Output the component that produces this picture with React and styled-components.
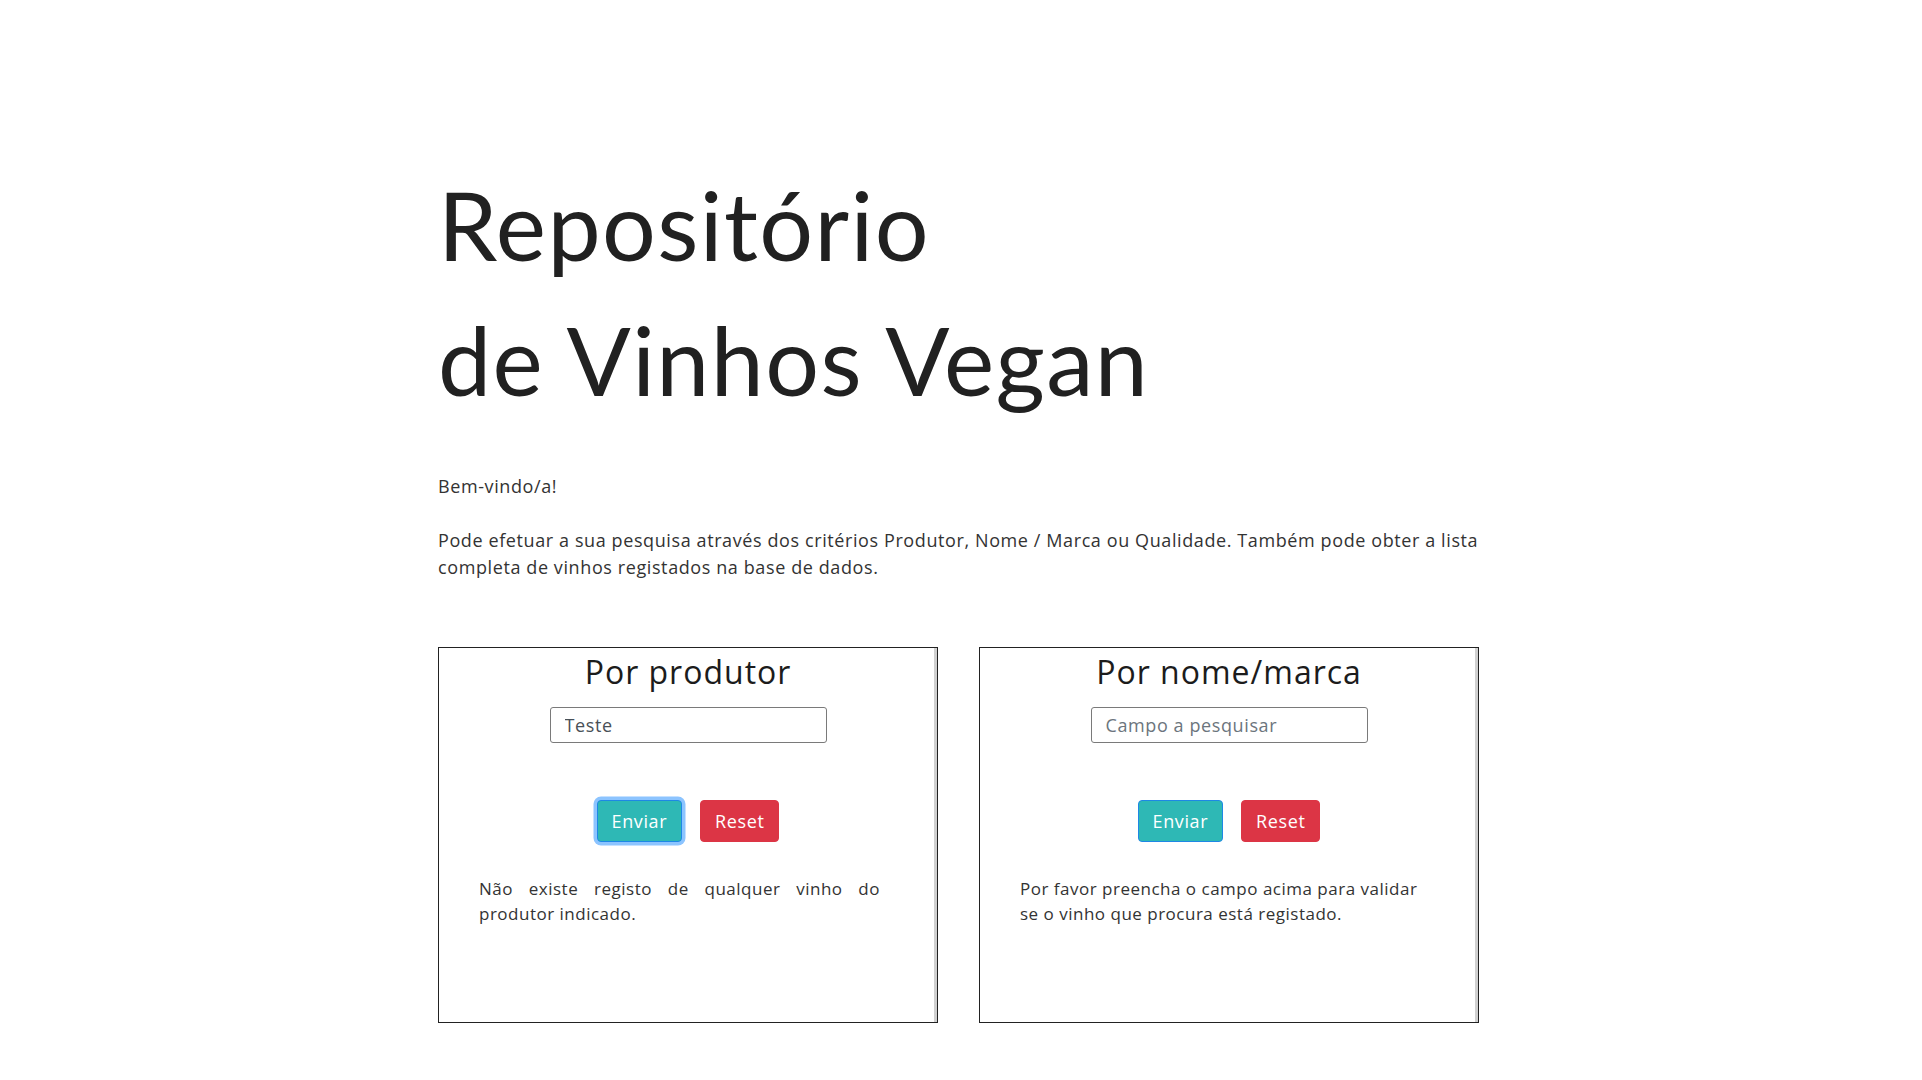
import React from 'react';
import styled, { createGlobalStyle } from 'styled-components';

const GlobalStyle = createGlobalStyle`
    html, body {
        margin: 0;
        padding: 0;
        background: #ffffff;
    }
    body {
        font-family: "Open Sans", "Noto Sans", sans-serif;
        color: #333333;
    }
`;

const Page = styled.main`
    width: 1046px;
    margin: 0 auto;
    padding-top: 157px;
    padding-bottom: 50px;
`;

const Title = styled.h1`
    margin: 0;
    font-family: "Lato", "Noto Sans", sans-serif;
    font-weight: 400;
    font-size: 95px;
    line-height: 135px;
    color: #212121;
    letter-spacing: 1.4px;
`;

const Intro = styled.p`
    margin: ${(p) => p.top || 0}px 0 0;
    font-size: 18px;
    line-height: 27px;
    letter-spacing: 0.6px;
    color: #333333;
`;

const Cards = styled.section`
    display: grid;
    grid-template-columns: 500px 500px;
    column-gap: 41px;
    margin-top: 66px;
`;

const Card = styled.div`
    box-sizing: border-box;
    height: 376px;
    border: 1px solid #222222;
    box-shadow: inset -3px 0 0 #d0d0d0;
    display: flex;
    flex-direction: column;
    align-items: center;
    padding: 2px 0 0;
`;

const CardTitle = styled.h2`
    margin: 0;
    font-family: "Open Sans", "Noto Sans", sans-serif;
    font-weight: 400;
    font-size: 32px;
    line-height: 44px;
    letter-spacing: 1px;
    color: #1c1c1c;
`;

const SearchInput = styled.input`
    box-sizing: border-box;
    width: 277px;
    height: 36px;
    margin-top: 13px;
    padding: 0 14px;
    border: 1px solid #7a7a7a;
    border-radius: 3px;
    font-family: "Open Sans", "Noto Sans", sans-serif;
    font-size: 18px;
    letter-spacing: 0.6px;
    color: #495057;
    outline: none;
    &::placeholder {
        color: #6c757d;
    }
`;

const Actions = styled.div`
    display: flex;
    gap: 18px;
    margin-top: 57px;
`;

const Button = styled.button`
    box-sizing: border-box;
    height: 42px;
    padding: 0 14px;
    border-radius: 4px;
    border: 1px solid ${(p) => (p.$variant === 'info' ? '#1e88e5' : '#dc3545')};
    background: ${(p) => (p.$variant === 'info' ? '#2eb8b5' : '#dc3545')};
    color: #ffffff;
    font-family: "Open Sans", "Noto Sans", sans-serif;
    font-size: 18px;
    letter-spacing: 0.6px;
    box-shadow: ${(p) => (p.$focused ? '0 0 0 3.5px #8cc4ff' : 'none')};
    cursor: pointer;
`;

const Message = styled.p`
    box-sizing: border-box;
    align-self: stretch;
    width: 441px;
    margin: 34px 0 0;
    padding-left: 40px;
    font-size: 17px;
    line-height: 25px;
    letter-spacing: 0.5px;
    color: #333333;
    text-align: ${(p) => (p.$justify ? 'justify' : 'left')};
`;

const SearchCard = ({ title, value, placeholder, focused, message, justify }) => (
    <Card>
        <CardTitle>{title}</CardTitle>
        <SearchInput defaultValue={value} placeholder={placeholder} />
        <Actions>
            <Button $variant="info" $focused={focused}>Enviar</Button>
            <Button $variant="danger">Reset</Button>
        </Actions>
        <Message $justify={justify}>{message}</Message>
    </Card>
);

const App = () => (
    <>
        <GlobalStyle />
        <Page>
            <Title>
                Repositório
                <br />
                de Vinhos Vegan
            </Title>
            <Intro top={46}>Bem-vindo/a!</Intro>
            <Intro top={27}>
                Pode efetuar a sua pesquisa através dos critérios Produtor, Nome / Marca ou
                Qualidade. Também pode obter a lista completa de vinhos registados na base de dados.
            </Intro>
            <Cards>
                <SearchCard
                    title="Por produtor"
                    value="Teste"
                    focused
                    justify
                    message="Não existe registo de qualquer vinho do produtor indicado."
                />
                <SearchCard
                    title="Por nome/marca"
                    placeholder="Campo a pesquisar"
                    message="Por favor preencha o campo acima para validar se o vinho que procura está registado."
                />
            </Cards>
        </Page>
    </>
);

export default App;
